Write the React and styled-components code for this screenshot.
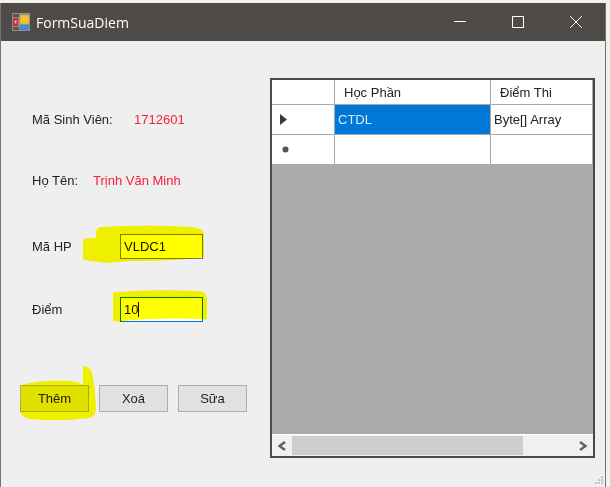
import React from "react"
import styled, { createGlobalStyle } from "styled-components"

const GlobalStyle = createGlobalStyle`
  html, body {
    margin: 0;
    padding: 0;
    background: #f2f2ea;
  }
  body {
    width: 610px;
    height: 487px;
    overflow: hidden;
    font-family: "Liberation Sans", Arial, sans-serif;
  }
`

const Desktop = styled.div`
  width: 610px;
  height: 487px;
  padding: 3px 4px 0 0;
  box-sizing: border-box;
  overflow: hidden;
`

const Window = styled.div`
  position: relative;
  width: 606px;
  height: 484px;
  box-sizing: border-box;
  background: #efefef;
  border-left: 1px solid #77736f;
  border-right: 1px solid #77736f;
  display: flex;
  flex-direction: column;
`

const TitleBar = styled.div`
  height: 38px;
  flex: none;
  background: #4d4a47;
  display: flex;
  align-items: center;
  padding-left: 11px;
  color: #fff;
  font-family: "Open Sans", sans-serif;
  font-size: 14px;
`

const TitleText = styled.span`
  margin-left: 6px;
  flex: 1;
`

const WinButton = styled.div`
  width: 58px;
  height: 38px;
  display: flex;
  align-items: center;
  justify-content: center;
`

const Content = styled.div`
  flex: 1;
  display: flex;
`

const LeftPanel = styled.div`
  width: 269px;
  flex: none;
  box-sizing: border-box;
  padding-top: 66px;
  display: flex;
  flex-direction: column;
`

const Row = styled.div`
  display: flex;
  align-items: center;
  height: ${({ $height }) => $height}px;
  margin-top: ${({ $top }) => $top}px;
  padding-left: ${({ $left }) => $left}px;
`

const Label = styled.span`
  width: ${({ $width }) => $width}px;
  flex: none;
  font-size: 13px;
  color: #222;
`

const Value = styled.span`
  font-size: 13px;
  color: #f5203c;
`

const Input = styled.div`
  width: 83px;
  height: 25px;
  box-sizing: border-box;
  background: #fff;
  border: 1px solid ${({ $focused }) => ($focused ? "#0078d7" : "#7a7a7a")};
  padding-left: 3px;
  display: flex;
  align-items: center;
  font-size: 13px;
  color: #111;
`

const Caret = styled.span`
  width: 1px;
  height: 15px;
  background: #111;
`

const Button = styled.div`
  width: 69px;
  height: 27px;
  box-sizing: border-box;
  background: #e1e1e1;
  border: 1px solid #adadad;
  display: flex;
  align-items: center;
  justify-content: center;
  font-size: 13px;
  color: #222;
`

const ButtonRow = styled.div`
  display: flex;
  gap: 10px;
  margin-top: 63px;
  padding-left: 19px;
`

const Grid = styled.div`
  width: 325px;
  height: 380px;
  margin-top: 37px;
  box-sizing: border-box;
  border: 2px solid #4a4a4a;
  background: #ababab;
  display: flex;
  flex-direction: column;
  font-size: 13px;
  color: #222;
`

const GridRow = styled.div`
  display: flex;
  height: ${({ $height }) => $height}px;
  flex: none;
`

const Cell = styled.div`
  width: ${({ $width }) => $width}px;
  flex: none;
  box-sizing: border-box;
  background: ${({ $selected }) => ($selected ? "#0078d7" : "#fff")};
  color: ${({ $selected }) => ($selected ? "#d5e9fb" : "#222")};
  border-right: 1px solid #a8a8a8;
  border-bottom: 1px solid #a8a8a8;
  padding-left: ${({ $pad }) => $pad}px;
  display: flex;
  align-items: center;
`

const GridSpacer = styled.div`
  flex: 1;
`

const ScrollBar = styled.div`
  height: 22px;
  flex: none;
  background: #f0f0f0;
  display: flex;
  align-items: center;
  border-top: 1px solid #fff;
  box-sizing: border-box;
`

const ScrollArrow = styled.div`
  width: 20px;
  flex: none;
  display: flex;
  align-items: center;
  justify-content: center;
`

const ScrollTrack = styled.div`
  flex: 1;
  height: 100%;
  padding: 1px 0;
  box-sizing: border-box;
`

const ScrollThumb = styled.div`
  width: 231px;
  height: 100%;
  background: #cdcdcd;
`

const Highlights = styled.svg`
  position: absolute;
  left: -1px;
  top: -3px;
  pointer-events: none;
  mix-blend-mode: multiply;
`

const Grip = styled.svg`
  position: absolute;
  right: 1px;
  bottom: 0;
`

function AppIcon() {
  return (
    <svg width="18" height="18" viewBox="0 0 18 18">
      <rect x="0" y="0" width="18" height="18" fill="#8f8f8f" />
      <rect x="1" y="1" width="6" height="3" fill="#555" />
      <rect x="1" y="5" width="5" height="8" fill="#c62f2f" />
      <rect x="2.5" y="7.5" width="2" height="3" fill="#f0b0b0" />
      <rect x="1" y="14" width="6" height="3" fill="#555" />
      <rect x="8" y="2" width="9" height="9" fill="#f4c430" stroke="#c9962a" strokeWidth="0.6" />
      <rect x="8" y="12" width="9" height="5" fill="#3f8be0" />
    </svg>
  )
}

function MinimizeIcon() {
  return (
    <svg width="12" height="12" viewBox="0 0 12 12">
      <line x1="0" y1="5.5" x2="12" y2="5.5" stroke="#fff" />
    </svg>
  )
}

function MaximizeIcon() {
  return (
    <svg width="12" height="12" viewBox="0 0 12 12">
      <rect x="0.5" y="0.5" width="11" height="11" fill="none" stroke="#fff" />
    </svg>
  )
}

function CloseIcon() {
  return (
    <svg width="12" height="12" viewBox="0 0 12 12">
      <path d="M0 0 L12 12 M12 0 L0 12" stroke="#fff" fill="none" />
    </svg>
  )
}

function Chevron({ flip }) {
  return (
    <svg width="10" height="10" viewBox="0 0 10 10">
      <path
        d={flip ? "M2 1 L7.5 5 L2 9" : "M8 1 L2.5 5 L8 9"}
        stroke="#606060"
        strokeWidth="2.4"
        fill="none"
      />
    </svg>
  )
}

export default function App() {
  return (
    <Desktop>
      <GlobalStyle />
      <Window>
        <TitleBar>
          <AppIcon />
          <TitleText>FormSuaDiem</TitleText>
          <WinButton><MinimizeIcon /></WinButton>
          <WinButton><MaximizeIcon /></WinButton>
          <WinButton><CloseIcon /></WinButton>
        </TitleBar>
        <Content>
          <LeftPanel>
            <Row $height={24} $top={0} $left={31}>
              <Label $width={102}>Mã Sinh Viên:</Label>
              <Value>1712601</Value>
            </Row>
            <Row $height={24} $top={37} $left={31}>
              <Label $width={61}>Họ Tên:</Label>
              <Value>Trịnh Văn Minh</Value>
            </Row>
            <Row $height={25} $top={42} $left={31}>
              <Label $width={88}>Mã HP</Label>
              <Input>VLDC1</Input>
            </Row>
            <Row $height={25} $top={38} $left={31}>
              <Label $width={88}>Điểm</Label>
              <Input $focused>10<Caret /></Input>
            </Row>
            <ButtonRow>
              <Button>Thêm</Button>
              <Button>Xoá</Button>
              <Button>Sữa</Button>
            </ButtonRow>
          </LeftPanel>
          <Grid>
            <GridRow $height={25}>
              <Cell $width={63} />
              <Cell $width={156} $pad={9}>Học Phần</Cell>
              <Cell $width={102} $pad={9}>Điểm Thi</Cell>
            </GridRow>
            <GridRow $height={30}>
              <Cell $width={63} $pad={8}>
                <svg width="7" height="11" viewBox="0 0 7 11"><path d="M0 0 L7 5.5 L0 11 Z" fill="#3a3a3a" /></svg>
              </Cell>
              <Cell $width={156} $pad={3} $selected>CTDL</Cell>
              <Cell $width={102} $pad={3}>Byte[] Array</Cell>
            </GridRow>
            <GridRow $height={30}>
              <Cell $width={63} $pad={10}>
                <svg width="7" height="7" viewBox="0 0 7 7"><circle cx="3.5" cy="3.5" r="3" fill="#555" /></svg>
              </Cell>
              <Cell $width={156} />
              <Cell $width={102} />
            </GridRow>
            <GridSpacer />
            <ScrollBar>
              <ScrollArrow><Chevron /></ScrollArrow>
              <ScrollTrack><ScrollThumb /></ScrollTrack>
              <ScrollArrow><Chevron flip /></ScrollArrow>
            </ScrollBar>
          </Grid>
        </Content>
        <Grip width="12" height="12" viewBox="0 0 12 12">
          <g fill="#c4c4c4">
            <rect x="9" y="1" width="2" height="2" />
            <rect x="6" y="4" width="2" height="2" />
            <rect x="9" y="4" width="2" height="2" />
            <rect x="3" y="7" width="2" height="2" />
            <rect x="6" y="7" width="2" height="2" />
            <rect x="9" y="7" width="2" height="2" />
          </g>
        </Grip>
        <Highlights width="610" height="487" viewBox="0 0 610 487">
          <g fill="#ffff00">
            <path d="M83 240 Q83 238 96 238 Q95 229 100 227 Q150 224 192 227 Q203 228 204 234 L204 257 Q180 261 130 261 Q105 264 100 262 Q85 261 83 259 Z" />
            <path d="M113 293 Q113 292 120 292 Q150 289 200 291 Q207 292 207 300 L207 318 Q206 321 203 319 Q170 318 150 319 Q125 320 122 322 L113 321 Z" />
            <path d="M83 366 Q92 366 93 378 Q96 395 96 410 Q95 417 88 418 Q60 422 30 419 Q21 417 20 410 L21 385 Q40 380 70 381 Q80 382 83 385 Z" />
          </g>
        </Highlights>
      </Window>
    </Desktop>
  )
}
